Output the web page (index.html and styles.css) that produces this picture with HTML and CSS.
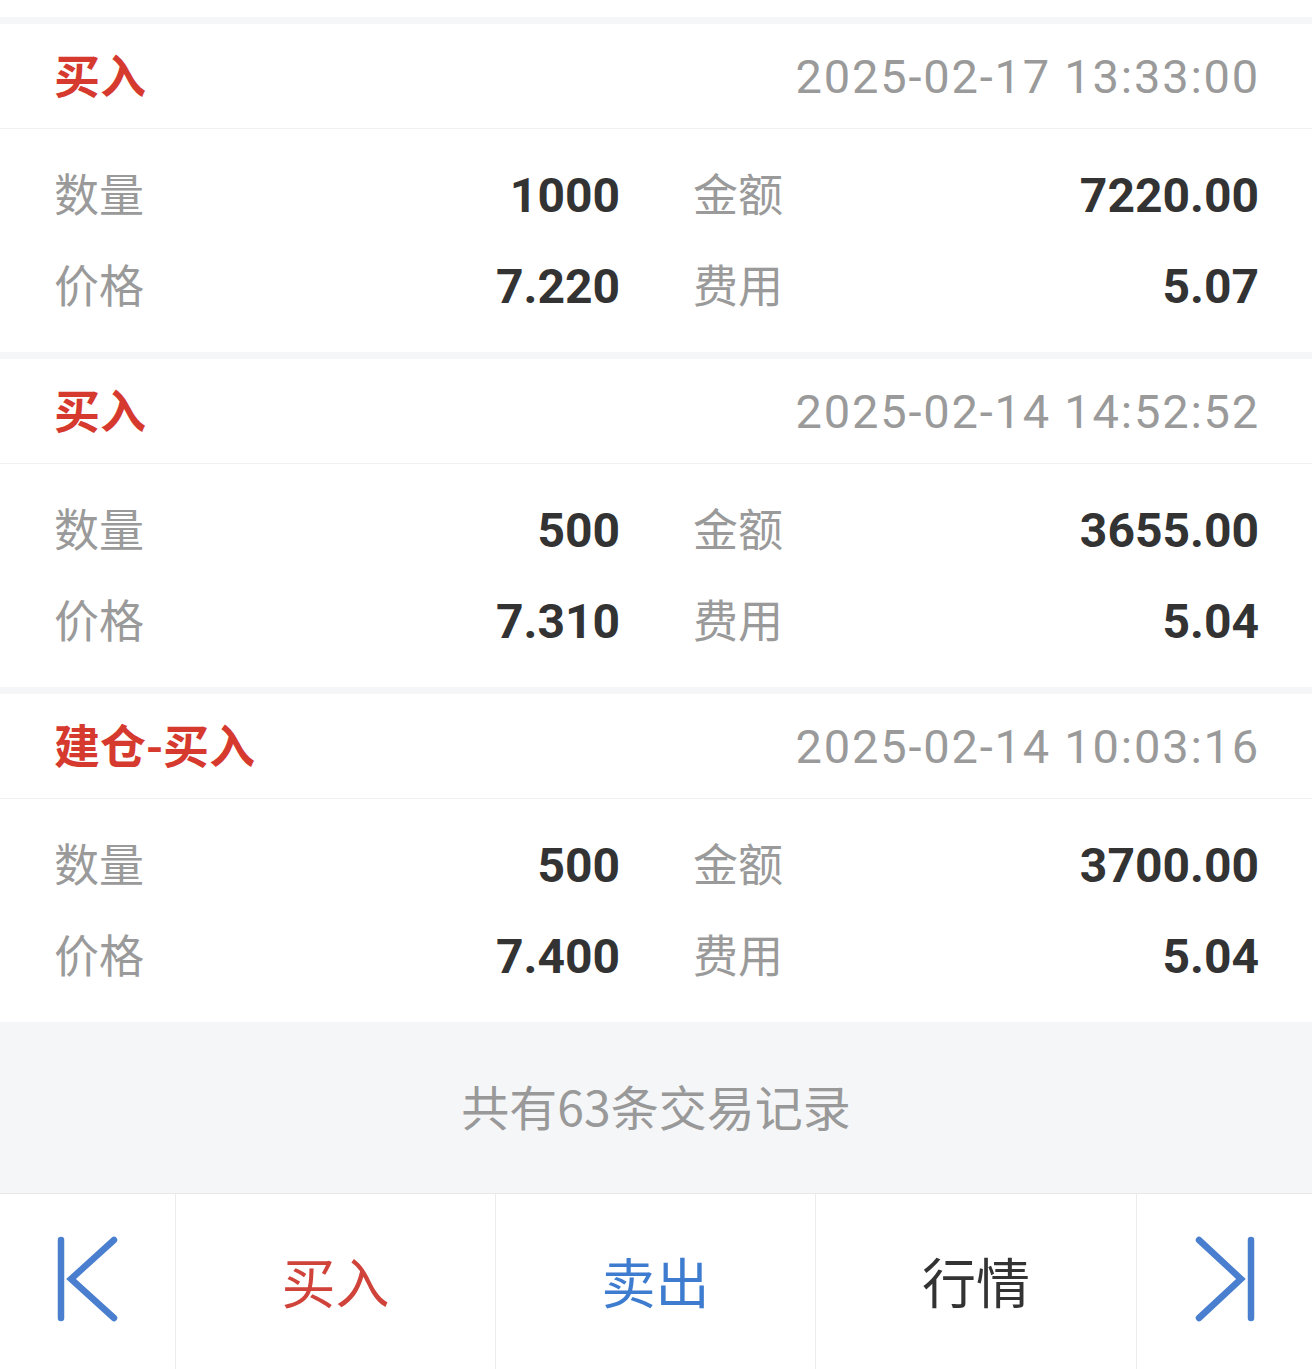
FILE: index.html
```html
<!DOCTYPE html>
<html lang="zh-CN">

<head>
    <meta charset="UTF-8">
    <meta name="viewport" content="width=device-width, initial-scale=1.0">
    <title>交易记录</title>
    <link rel="stylesheet" href="styles.css">
</head>

<body>
    <!-- 上一条记录的底部 -->
    <div class="card-tail"></div>

    <div class="list">
        <div class="card">
            <div class="card-head">
                <span class="type">买入</span>
                <span class="time">2025-02-17 13:33:00</span>
            </div>
            <div class="card-body">
                <div class="cell"><span class="label">数量</span><span class="value">1000</span></div>
                <div class="cell"><span class="label">金额</span><span class="value">7220.00</span></div>
                <div class="cell"><span class="label">价格</span><span class="value">7.220</span></div>
                <div class="cell"><span class="label">费用</span><span class="value">5.07</span></div>
            </div>
        </div>

        <div class="card">
            <div class="card-head">
                <span class="type">买入</span>
                <span class="time">2025-02-14 14:52:52</span>
            </div>
            <div class="card-body">
                <div class="cell"><span class="label">数量</span><span class="value">500</span></div>
                <div class="cell"><span class="label">金额</span><span class="value">3655.00</span></div>
                <div class="cell"><span class="label">价格</span><span class="value">7.310</span></div>
                <div class="cell"><span class="label">费用</span><span class="value">5.04</span></div>
            </div>
        </div>

        <div class="card">
            <div class="card-head">
                <span class="type">建仓-买入</span>
                <span class="time">2025-02-14 10:03:16</span>
            </div>
            <div class="card-body">
                <div class="cell"><span class="label">数量</span><span class="value">500</span></div>
                <div class="cell"><span class="label">金额</span><span class="value">3700.00</span></div>
                <div class="cell"><span class="label">价格</span><span class="value">7.400</span></div>
                <div class="cell"><span class="label">费用</span><span class="value">5.04</span></div>
            </div>
        </div>
    </div>

    <div class="summary">共有63条交易记录</div>

    <!-- 底部操作栏 -->
    <div class="toolbar">
        <div class="tool">
            <svg width="67" height="93" viewBox="0 0 67 93" fill="none" stroke="#4a7fd0" stroke-width="6.5" stroke-linecap="round">
                <path d="M7 8V86" />
                <path d="M60 8L17 47L60 86" />
            </svg>
        </div>
        <div class="tool buy">买入</div>
        <div class="tool sell">卖出</div>
        <div class="tool quote">行情</div>
        <div class="tool">
            <svg width="66" height="93" viewBox="0 0 66 93" fill="none" stroke="#4a7fd0" stroke-width="6.5" stroke-linecap="round">
                <path d="M59 8V86" />
                <path d="M7 8L49 47L7 86" />
            </svg>
        </div>
    </div>
</body>

</html>
```

FILE: styles.css
```css
* {
    box-sizing: border-box;
}

body {
    margin: 0;
    font-family: Roboto, "Noto Sans CJK SC", sans-serif;
    background-color: #fff;
}

.card-tail {
    height: 17px;
    background-color: #fff;
}

.list {
    background-color: #f5f6f8;
    padding-top: 7px;
    display: flex;
    flex-direction: column;
    gap: 7px;
}

.card {
    background-color: #fff;
}

.card-head {
    height: 105px;
    padding: 0 52px 0 54px;
    display: flex;
    justify-content: space-between;
    align-items: center;
    border-bottom: 1px solid #f0f0f0;
}

.type {
    font-family: "Noto Sans CJK SC", sans-serif;
    font-size: 46px;
    font-weight: bold;
    color: #d63a2f;
    padding-bottom: 6px;
}

.time {
    font-size: 47px;
    letter-spacing: 1.8px;
    color: #9a9a9a;
}

.card-body {
    padding: 21px 53px 20px 54px;
    display: grid;
    grid-template-columns: 1fr 1fr;
    column-gap: 73px;
    grid-auto-rows: 91px;
}

.cell {
    display: flex;
    justify-content: space-between;
    align-items: center;
}

.label {
    font-family: "Noto Sans CJK SC", sans-serif;
    font-size: 45px;
    color: #9a9a9a;
    padding-bottom: 6px;
}

.value {
    font-size: 48px;
    font-weight: bold;
    color: #333;
}

.summary {
    height: 172px;
    background-color: #f5f6f8;
    display: flex;
    justify-content: center;
    align-items: center;
    font-family: "Noto Sans CJK SC", sans-serif;
    font-size: 48px;
    color: #999;
    padding-bottom: 6px;
    border-bottom: 1px solid #e8e8e8;
}

.toolbar {
    display: grid;
    grid-template-columns: 176px 320px 320px 321px 1fr;
    height: 175px;
}

.tool {
    display: flex;
    justify-content: center;
    align-items: center;
    border-right: 1px solid #ececec;
    font-family: "Noto Sans CJK SC", sans-serif;
    font-size: 54px;
    padding-bottom: 3px;
}

.tool:last-child {
    border-right: none;
}

.tool svg {
    margin-bottom: 4px;
}

.buy {
    color: #d0433a;
}

.sell {
    color: #3d7ccf;
}

.quote {
    color: #333;
}
```
